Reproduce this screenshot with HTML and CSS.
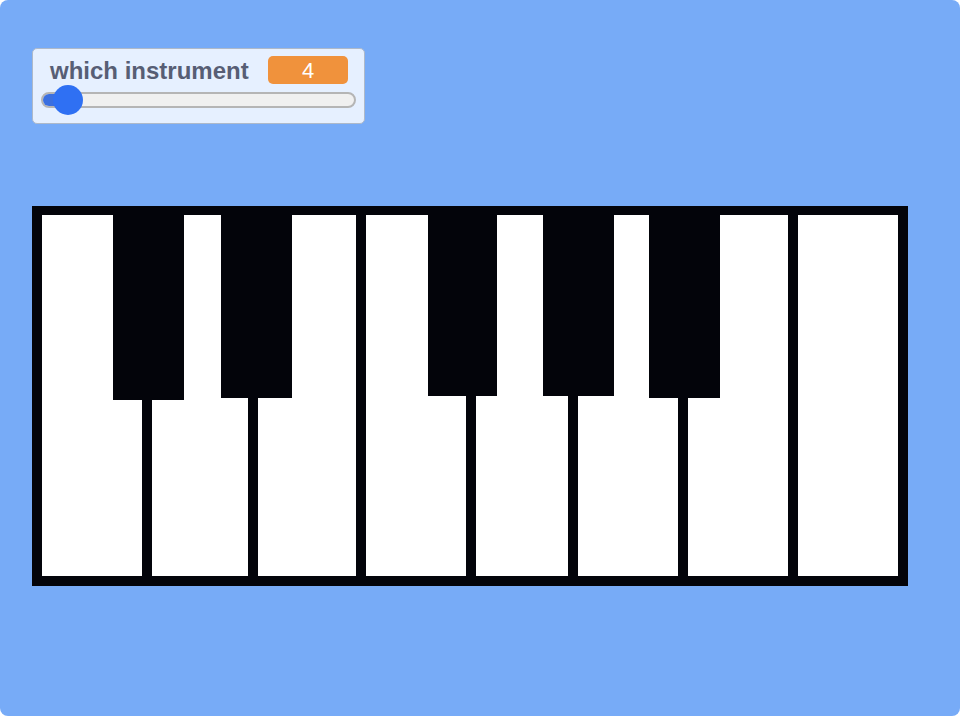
FILE: index.html
```html
<!DOCTYPE html>
<html>
<head>
<meta charset="utf-8">
<link rel="stylesheet" href="styles.css">
</head>
<body>
<div class="stage">
  <div class="monitor">
    <div class="monitor-row">
      <span class="label">which instrument</span>
      <span class="value">4</span>
    </div>
    <div class="slider">
      <div class="track">
        <div class="fill"></div>
      </div>
      <div class="knob"></div>
    </div>
  </div>
  <div class="piano">
    <div class="wk w1"></div>
    <div class="wk w2"></div>
    <div class="wk w3"></div>
    <div class="wk w4"></div>
    <div class="wk w5"></div>
    <div class="wk w6"></div>
    <div class="wk w7"></div>
    <div class="wk w8"></div>
    <div class="bk b1"></div>
    <div class="bk b2"></div>
    <div class="bk b3"></div>
    <div class="bk b4"></div>
    <div class="bk b5"></div>
  </div>
</div>
</body>
</html>
```
FILE: styles.css
```css
html, body {
  margin: 0;
  padding: 0;
  background: #ffffff;
}
.stage {
  width: 960px;
  height: 716px;
  box-sizing: border-box;
  background: #77abf7;
  border-radius: 8px;
  padding: 48px 0 0 32px;
  overflow: hidden;
}
.monitor {
  width: 333px;
  height: 76px;
  box-sizing: border-box;
  background: #e6f0ff;
  border: 1px solid #aeb9c9;
  border-radius: 5px;
  padding: 7px 8px;
  font-family: "Liberation Sans", Arial, sans-serif;
}
.monitor-row {
  display: flex;
  justify-content: space-between;
  align-items: center;
  height: 28px;
  padding: 0 8px 0 9px;
}
.label {
  font-size: 24px;
  font-weight: bold;
  color: #575e75;
  line-height: 28px;
  padding-top: 1px;
}
.value {
  width: 80px;
  height: 28px;
  box-sizing: border-box;
  padding-top: 2px;
  background: #f0923c;
  color: #ffffff;
  border-radius: 5px;
  font-size: 22px;
  line-height: 26px;
  text-align: center;
}
.slider {
  position: relative;
  height: 32px;
  display: flex;
  align-items: center;
}
.track {
  width: 316px;
  height: 16px;
  box-sizing: border-box;
  background: #f0f0f0;
  border: 2px solid #b5b5b5;
  border-radius: 8px;
  overflow: hidden;
  display: flex;
}
.fill {
  width: 26px;
  height: 100%;
  background: #3a6fe0;
}
.knob {
  position: absolute;
  left: 12px;
  top: 1px;
  width: 30px;
  height: 30px;
  border-radius: 50%;
  background: #2f70f3;
}
.piano {
  position: relative;
  margin-top: 82px;
  width: 876px;
  height: 380px;
  box-sizing: border-box;
  background: #03040a;
  padding: 9px 10px 10px 10px;
  display: flex;
  gap: 10px;
}
.wk {
  background: #ffffff;
  height: 100%;
}
.w1 { width: 100px; }
.w2 { width: 96px; }
.w3 { width: 98px; }
.w4 { width: 100px; }
.w5 { width: 92px; }
.w6 { width: 100px; }
.w7 { width: 100px; }
.w8 { width: 100px; }
.bk {
  position: absolute;
  top: 9px;
  background: #03040a;
}
.b1 { left: 81px; width: 71px; height: 185px; }
.b2 { left: 189px; width: 71px; height: 183px; }
.b3 { left: 396px; width: 69px; height: 181px; }
.b4 { left: 511px; width: 71px; height: 181px; }
.b5 { left: 617px; width: 71px; height: 183px; }
```
